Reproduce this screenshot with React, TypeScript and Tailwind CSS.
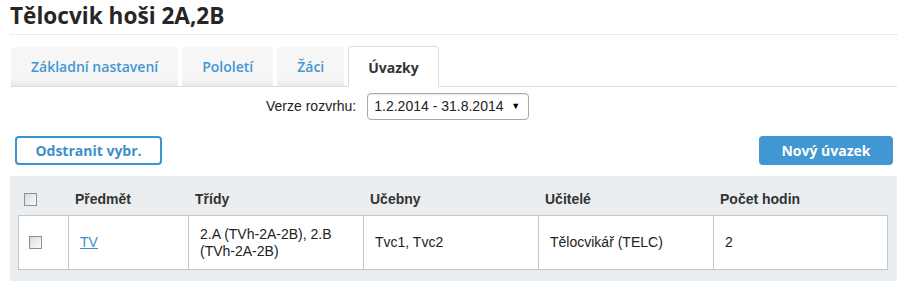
// Úvazky – detail skupiny (tab "Úvazky"), statická rekonstrukce obrazovky.
import React from "react";

const TABS = [
  { label: "Základní nastavení", active: false },
  { label: "Pololetí", active: false },
  { label: "Žáci", active: false },
  { label: "Úvazky", active: true },
];

const COLS = [
  { title: "Předmět", w: "w-[120px]" },
  { title: "Třídy", w: "w-[175px]" },
  { title: "Učebny", w: "w-[175px]" },
  { title: "Učitelé", w: "w-[175px]" },
  { title: "Počet hodin", w: "w-[175px]" },
];

function Checkbox() {
  return (
    <span className="block h-[13px] w-[13px] border border-[#8f8f8f] bg-gradient-to-br from-[#dcdcdc] to-[#fbfbfb]" />
  );
}

export default function App() {
  return (
    <main className="min-h-screen bg-white pl-[10px] pr-[2px] font-['Liberation_Sans',Arial,sans-serif] text-[14px] text-[#222]">
      <h1 className="pt-[1px] font-['Open_Sans',sans-serif] text-[22.6px] font-bold leading-[30px] text-[#262626]">
        Tělocvik hoši 2A,2B
      </h1>
      <div className="mt-[3px] border-t border-dotted border-[#d6d6d6]" />

      {/* záložky */}
      <nav className="mt-[11px] flex items-end gap-[4px] border-b border-[#dddddd] pl-[1px]">
        {TABS.map((t) =>
          t.active ? (
            <div
              key={t.label}
              className="-mb-px flex h-[41px] items-center rounded-t-[4px] border border-b-0 border-[#dddddd] bg-white px-[19px] font-['Open_Sans',sans-serif] text-[14px] font-bold text-[#333]"
            >
              {t.label}
            </div>
          ) : (
            <div
              key={t.label}
              className="flex h-[39px] items-center rounded-t-[4px] bg-gradient-to-b from-[#f6f6f6] from-80% to-[#e8e8e8] px-[20px] font-['Open_Sans',sans-serif] text-[14px] font-semibold text-[#4297d2]"
            >
              {t.label}
            </div>
          )
        )}
      </nav>

      {/* verze rozvrhu */}
      <div className="mt-[6px] flex items-center pl-[256px]">
        <span className="mr-[11px]">Verze rozvrhu:</span>
        <div className="flex h-[27px] w-[162px] items-center justify-between rounded-[4px] border border-[#a8a8a8] bg-white pl-[6px] pr-[8px] shadow-[inset_0_1px_1px_rgba(0,0,0,0.08)]">
          <span>1.2.2014 - 31.8.2014</span>
          <span className="text-[9px] text-black">▼</span>
        </div>
      </div>

      {/* akce */}
      <div className="mt-[16px] flex items-center justify-between pl-[5px] pr-[4px]">
        <button className="h-[29px] w-[147px] rounded-[4px] border-2 border-[#3d94d0] bg-white font-['Open_Sans',sans-serif] text-[14px] font-bold text-[#3d8fca]">
          Odstranit vybr.
        </button>
        <button className="h-[29px] w-[134px] rounded-[4px] bg-[#4097d1] font-['Open_Sans',sans-serif] text-[14px] font-bold text-white">
          Nový úvazek
        </button>
      </div>

      {/* tabulka úvazků */}
      <section className="mt-[11px] bg-[#ebeef0] pb-[11px] pl-[8px] pr-[9px] pt-[8px]">
        <div className="flex h-[31px] items-center">
          <div className="w-[50px] pl-[6px]">
            <Checkbox />
          </div>
          {COLS.map((c) => (
            <div key={c.title} className={`${c.w} pl-[7px] font-bold text-[#333]`}>
              {c.title}
            </div>
          ))}
        </div>
        <div className="flex h-[55px] border border-[#c4c7c9] bg-white leading-[17px]">
          <div className="flex w-[49px] items-center pl-[10px]">
            <Checkbox />
          </div>
          <div className="flex w-[120px] items-center border-l border-[#c4c7c9] pl-[11px]">
            <a href="#" className="text-[#3a8fcf] underline">
              TV
            </a>
          </div>
          <div className="flex w-[175px] items-center border-l border-[#c4c7c9] pl-[11px] pr-[8px]">
            2.A (TVh-2A-2B), 2.B (TVh-2A-2B)
          </div>
          <div className="flex w-[175px] items-center border-l border-[#c4c7c9] pl-[11px]">Tvc1, Tvc2</div>
          <div className="flex w-[175px] items-center border-l border-[#c4c7c9] pl-[11px]">
            Tělocvikář (TELC)
          </div>
          <div className="flex w-[174px] items-center border-l border-[#c4c7c9] pl-[11px]">2</div>
        </div>
      </section>
    </main>
  );
}
